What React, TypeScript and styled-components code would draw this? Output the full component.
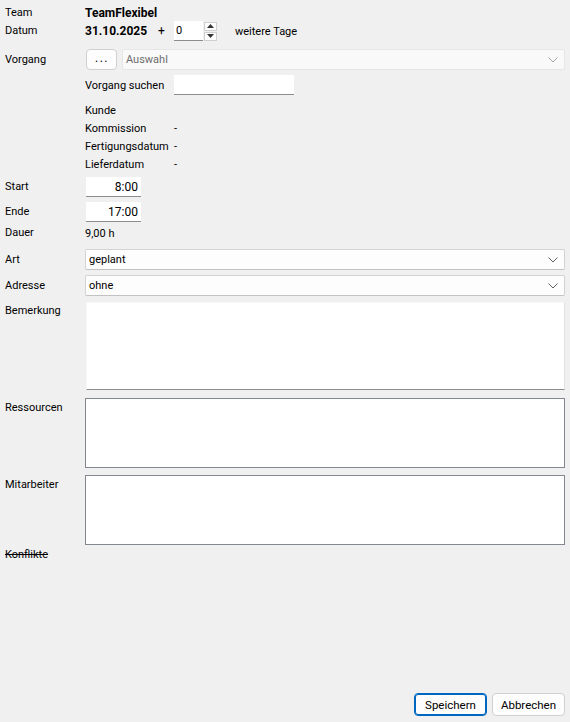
import styled, { createGlobalStyle } from 'styled-components';

const GlobalStyle = createGlobalStyle`
  html, body {
    margin: 0;
    padding: 0;
    background: #f0f0f0;
  }
  body {
    font-family: Roboto, "Noto Sans", sans-serif;
    font-size: 11px;
    color: #000;
  }
`;

const Page = styled.div`
  width: 570px;
  height: 722px;
  box-sizing: border-box;
  padding: 4px 5px 6px 5px;
  display: flex;
  flex-direction: column;
`;

const Row = styled.div<{ $h: number; $mt?: number; $top?: boolean }>`
  display: grid;
  grid-template-columns: 80px 1fr;
  align-items: ${(p) => (p.$top ? 'start' : 'center')};
  height: ${(p) => p.$h}px;
  margin-top: ${(p) => p.$mt ?? 0}px;
`;

const Label = styled.span<{ $strike?: boolean; $pt?: number }>`
  white-space: nowrap;
  line-height: 18px;
  padding-top: ${(p) => p.$pt ?? 0}px;
  text-decoration: ${(p) => (p.$strike ? 'line-through' : 'none')};
`;

const Bold = styled.span`
  font-weight: 700;
  font-size: 12px;
  white-space: nowrap;
`;

const SubRow = styled.div`
  display: grid;
  grid-template-columns: 89px 1fr;
  align-items: center;
  height: 100%;
  white-space: nowrap;
`;

const Inline = styled.div`
  display: flex;
  align-items: center;
`;

const Plus = styled.span`
  margin-left: 11px;
  font-size: 12px;
`;

const NumField = styled.div`
  width: 29px;
  height: 20px;
  box-sizing: border-box;
  background: #fff;
  border-bottom: 1px solid #8c8c8c;
  padding: 1px 0 0 2px;
  line-height: 18px;
`;

const Spinner = styled.div`
  display: flex;
  flex-direction: column;
  gap: 1px;
  margin-left: 1px;
  margin-right: 18px;
`;

const SpinBtn = styled.div`
  width: 13px;
  height: 9px;
  box-sizing: border-box;
  border: 1px solid #d0d0d0;
  background: #fdfdfd;
  display: flex;
  align-items: center;
  justify-content: center;
`;

const DotsButton = styled.div`
  width: 31px;
  height: 21px;
  box-sizing: border-box;
  border: 1px solid #d0d0d0;
  border-radius: 4px;
  background: #fdfdfd;
  display: flex;
  align-items: center;
  justify-content: center;
  margin-left: 1px;
  padding: 0 0 3px 1px;
  font-size: 12px;
  letter-spacing: 1.5px;
`;

const Combo = styled.div<{ $disabled?: boolean; $ml?: number }>`
  flex: 1;
  height: 21px;
  box-sizing: border-box;
  margin-left: ${(p) => p.$ml ?? 0}px;
  border: 1px solid ${(p) => (p.$disabled ? '#e6e6e6' : '#d3d3d3')};
  border-bottom-color: ${(p) => (p.$disabled ? '#e6e6e6' : '#c2c2c2')};
  border-radius: 2px;
  background: ${(p) => (p.$disabled ? '#f9f9f9' : '#fdfdfd')};
  color: ${(p) => (p.$disabled ? '#6d6d6d' : '#000')};
  display: flex;
  align-items: center;
  justify-content: space-between;
  padding: 0 6px 0 3px;
`;

const TextField = styled.div<{ $w: number; $right?: boolean; $ml?: number }>`
  width: ${(p) => p.$w}px;
  height: 20px;
  box-sizing: border-box;
  margin-left: ${(p) => p.$ml ?? 0}px;
  background: #fff;
  border-bottom: 1px solid #8c8c8c;
  text-align: ${(p) => (p.$right ? 'right' : 'left')};
  padding: 1px 3px 0 3px;
  line-height: 18px;
  font-size: 12px;
`;

const Memo = styled.div<{ $h: number }>`
  height: ${(p) => p.$h}px;
  box-sizing: border-box;
  background: #fff;
  border: 1px solid #f7f7f7;
  border-right-color: #e2e2e2;
  border-bottom: 1px solid #8c8c8c;
  margin-left: 1px;
`;

const ListBox = styled.div<{ $h: number }>`
  height: ${(p) => p.$h}px;
  box-sizing: border-box;
  background: #fff;
  border: 1px solid #828790;
`;

const Spacer = styled.div`
  flex: 1;
`;

const Footer = styled.div`
  display: flex;
  justify-content: flex-end;
  gap: 5px;
`;

const Button = styled.button<{ $primary?: boolean }>`
  width: 73px;
  height: 23px;
  box-sizing: border-box;
  font: inherit;
  font-size: 11.5px;
  color: #000;
  background: #fdfdfd;
  border: 1px solid ${(p) => (p.$primary ? '#0067c0' : '#d0d0d0')};
  box-shadow: ${(p) => (p.$primary ? 'inset 0 0 0 1px #0067c0' : 'none')};
  border-radius: 4px;
  padding: 0;
`;

const Chevron = ({ color = '#606060' }: { color?: string }) => (
  <svg width="10" height="6" viewBox="0 0 10 6">
    <path d="M0.5 0.5 L5 5 L9.5 0.5" fill="none" stroke={color} strokeWidth="1" />
  </svg>
);

const Arrow = ({ up }: { up?: boolean }) => (
  <svg width="7" height="4" viewBox="0 0 7 4">
    <path d={up ? 'M0 4 L3.5 0 L7 4 Z' : 'M0 0 L3.5 4 L7 0 Z'} fill="#333" />
  </svg>
);

const infoRows = [
  { label: 'Kunde', value: '' },
  { label: 'Kommission', value: '-' },
  { label: 'Fertigungsdatum', value: '-' },
  { label: 'Lieferdatum', value: '-' },
];

export default function App() {
  return (
    <>
      <GlobalStyle />
      <Page>
        <Row $h={18}>
          <Label>Team</Label>
          <Bold>TeamFlexibel</Bold>
        </Row>
        <Row $h={20} $mt={-1}>
          <Label>Datum</Label>
          <SubRow>
            <Inline>
              <Bold>31.10.2025</Bold>
              <Plus>+</Plus>
            </Inline>
            <Inline>
              <NumField>0</NumField>
              <Spinner>
                <SpinBtn>
                  <Arrow up />
                </SpinBtn>
                <SpinBtn>
                  <Arrow />
                </SpinBtn>
              </Spinner>
              <span>weitere Tage</span>
            </Inline>
          </SubRow>
        </Row>
        <Row $h={21} $mt={8}>
          <Label>Vorgang</Label>
          <Inline>
            <DotsButton>...</DotsButton>
            <Combo $disabled $ml={5}>
              <span>Auswahl</span>
              <Chevron color="#a8a8a8" />
            </Combo>
          </Inline>
        </Row>
        <Row $h={20} $mt={5}>
          <span />
          <SubRow>
            <span>Vorgang suchen</span>
            <TextField $w={120} />
          </SubRow>
        </Row>
        <Row $h={18} $mt={6}>
          <span />
          <SubRow>
            <span>{infoRows[0].label}</span>
            <span>{infoRows[0].value}</span>
          </SubRow>
        </Row>
        {infoRows.slice(1).map((r) => (
          <Row key={r.label} $h={18}>
            <span />
            <SubRow>
              <span>{r.label}</span>
              <span>{r.value}</span>
            </SubRow>
          </Row>
        ))}
        <Row $h={20} $mt={4}>
          <Label>Start</Label>
          <TextField $w={55} $right $ml={1}>
            8:00
          </TextField>
        </Row>
        <Row $h={20} $mt={5}>
          <Label>Ende</Label>
          <TextField $w={55} $right $ml={1}>
            17:00
          </TextField>
        </Row>
        <Row $h={18} $mt={2}>
          <Label>Dauer</Label>
          <span>9,00 h</span>
        </Row>
        <Row $h={21} $mt={7}>
          <Label>Art</Label>
          <Combo>
            <span>geplant</span>
            <Chevron />
          </Combo>
        </Row>
        <Row $h={21} $mt={5}>
          <Label>Adresse</Label>
          <Combo>
            <span>ohne</span>
            <Chevron />
          </Combo>
        </Row>
        <Row $h={88} $mt={6} $top>
          <Label $pt={0}>Bemerkung</Label>
          <Memo $h={88} />
        </Row>
        <Row $h={70} $mt={8} $top>
          <Label $pt={1}>Ressourcen</Label>
          <ListBox $h={70} />
        </Row>
        <Row $h={70} $mt={7} $top>
          <Label $pt={1}>Mitarbeiter</Label>
          <ListBox $h={70} />
        </Row>
        <Row $h={18} $mt={1}>
          <Label $strike>Konflikte</Label>
          <span />
        </Row>
        <Spacer />
        <Footer>
          <Button $primary>Speichern</Button>
          <Button>Abbrechen</Button>
        </Footer>
      </Page>
    </>
  );
}
